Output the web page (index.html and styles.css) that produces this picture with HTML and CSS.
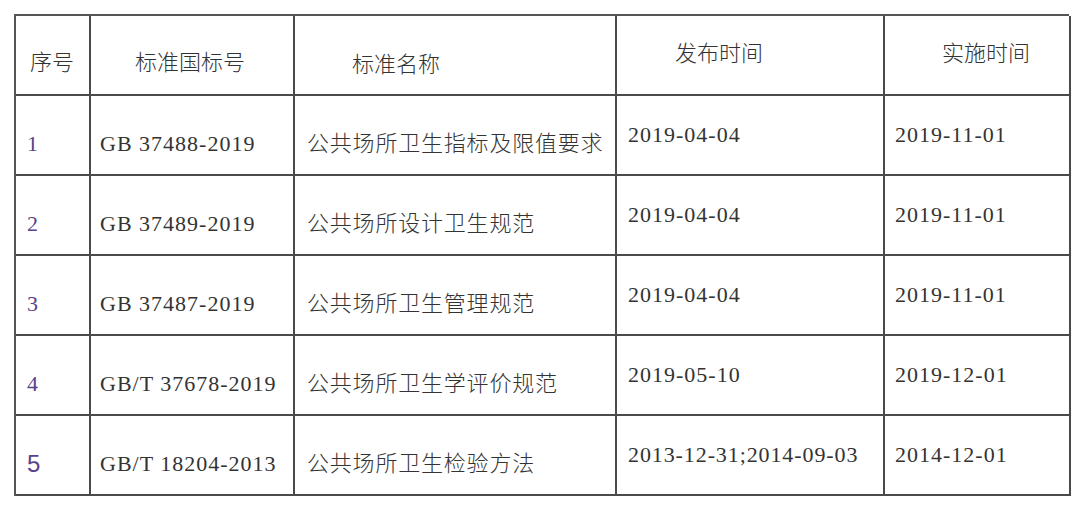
FILE: index.html
```html
<!DOCTYPE html>
<html lang="zh-CN">
<head>
<meta charset="utf-8">
<title>公共场所卫生标准</title>
<link rel="stylesheet" href="styles.css">
</head>
<body>
<div class="table">
  <div class="cell head c1 hlow">序号</div>
  <div class="cell head c2 hlow">标准国标号</div>
  <div class="cell head c3 hlower">标准名称</div>
  <div class="cell head c4">发布时间</div>
  <div class="cell head c5">实施时间</div>

  <div class="cell c1 low"><span class="num">1</span></div>
  <div class="cell c2 low lat">GB 37488-2019</div>
  <div class="cell c3 low name">公共场所卫生指标及限值要求</div>
  <div class="cell c4 lat">2019-04-04</div>
  <div class="cell c5 lat">2019-11-01</div>

  <div class="cell c1 low"><span class="num">2</span></div>
  <div class="cell c2 low lat">GB 37489-2019</div>
  <div class="cell c3 low name">公共场所设计卫生规范</div>
  <div class="cell c4 lat">2019-04-04</div>
  <div class="cell c5 lat">2019-11-01</div>

  <div class="cell c1 low"><span class="num">3</span></div>
  <div class="cell c2 low lat">GB 37487-2019</div>
  <div class="cell c3 low name">公共场所卫生管理规范</div>
  <div class="cell c4 lat">2019-04-04</div>
  <div class="cell c5 lat">2019-11-01</div>

  <div class="cell c1 low"><span class="num">4</span></div>
  <div class="cell c2 low lat">GB/T 37678-2019</div>
  <div class="cell c3 low name">公共场所卫生学评价规范</div>
  <div class="cell c4 lat">2019-05-10</div>
  <div class="cell c5 lat">2019-12-01</div>

  <div class="cell c1 low"><span class="num big">5</span></div>
  <div class="cell c2 low lat">GB/T 18204-2013</div>
  <div class="cell c3 low name">公共场所卫生检验方法</div>
  <div class="cell c4 lat dual">2013-12-31;2014-09-03</div>
  <div class="cell c5 lat">2014-12-01</div>
</div>
</body>
</html>
```

FILE: styles.css
```css
html, body {
  margin: 0;
  padding: 0;
  background: #ffffff;
}

body {
  padding: 14px 0 0 14px;
  font-family: "Liberation Serif", "Noto Sans CJK SC", serif;
  color: #2a2a2a;
}

.table {
  display: grid;
  width: 1055px;
  grid-template-columns: 75px 204px 322px 268px 186px;
  grid-auto-rows: 80px;
  border-left: 2px solid #555555;
  border-top: 2px solid #555555;
  box-sizing: border-box;
}

.cell {
  display: flex;
  align-items: center;
  border-right: 2px solid #4a4a4a;
  border-bottom: 2px solid #4a4a4a;
  font-size: 22px;
  line-height: 1;
  white-space: nowrap;
  box-sizing: border-box;
}

.head {
  font-family: "Noto Sans CJK SC", sans-serif;
  font-weight: 300;
  color: #333333;
  padding-bottom: 8px;
}

.head.c1 { padding-left: 14px; }
.head.c2 { padding-left: 44px; }
.head.c3 { padding-left: 57px; }
.head.c4 { padding-left: 58px; }
.head.c5 { padding-left: 57px; }

.low { padding-top: 18px; }

.head.hlow { padding-top: 10px; padding-bottom: 0; }
.head.hlower { padding-top: 14px; padding-bottom: 0; }

.c1 { padding-left: 11px; }
.c2 { padding-left: 9px; }
.c3 { padding-left: 12px; }
.c4 { padding-left: 11px; }
.c5 { padding-left: 10px; }

.lat {
  font-family: "Liberation Serif", serif;
  letter-spacing: 1px;
  color: #333333;
}

.name {
  font-family: "Noto Sans CJK SC", sans-serif;
  font-weight: 300;
  letter-spacing: 0.8px;
  color: #333333;
}

.cell.name.low {
  padding-top: 12px;
}

.num {
  font-family: "Liberation Serif", serif;
  color: #56438c;
  font-size: 22px;
}

.num.big {
  font-family: "Liberation Sans", sans-serif;
  font-size: 24px;
}

.dual {
  letter-spacing: 0.9px;
}
```
